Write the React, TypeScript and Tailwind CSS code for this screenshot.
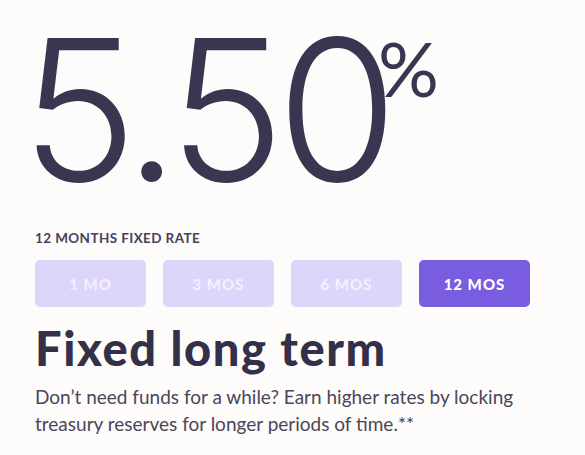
import React from "react";

export default function App() {
  const tabs = ["1 MO", "3 MOS", "6 MOS", "12 MOS"];
  return (
    <div
      className="w-[585px] h-[455px] overflow-hidden bg-[#fdfcfb] text-[#3a3550]"
      style={{ fontFamily: "Lato, 'Noto Sans', sans-serif" }}
    >
      <div className="pl-[35px] pt-[12px]">
        <div className="flex items-start leading-none">
          <span className="-ml-[14px] text-[196px] font-light tracking-[-8px] leading-[196px] [font-family:Inter,sans-serif]">
            5.50
          </span>
          <span className="text-[76px] font-normal leading-none mt-[18px] -ml-[12px]">%</span>
        </div>
        <div className="mt-[20px] text-[13.5px] font-bold tracking-[0.4px] text-[#47425a]">
          12 MONTHS FIXED RATE
        </div>
        <div className="mt-[12px] flex gap-[17px]">
          {tabs.map((t, i) => (
            <div
              key={t}
              className={
                i === 3
                  ? "w-[111px] h-[47px] rounded-[5px] bg-[#7a5ce0] text-white flex items-center justify-center text-[15px] font-black tracking-[1px]"
                  : "w-[111px] h-[47px] rounded-[5px] bg-[#ddd5fa] text-[#f3effe] flex items-center justify-center text-[15px] font-black tracking-[1px]"
              }
            >
              {t}
            </div>
          ))}
        </div>
        <div className="mt-[13px] text-[47px] font-black leading-[56px] tracking-[1.6px] text-[#33304a]">
          Fixed long term
        </div>
        <div className="mt-[7px] w-[520px] text-[19px] leading-[27px] text-[#4b4659]">
          Don’t need funds for a while? Earn higher rates by locking treasury reserves for longer periods of time.**
        </div>
      </div>
    </div>
  );
}
